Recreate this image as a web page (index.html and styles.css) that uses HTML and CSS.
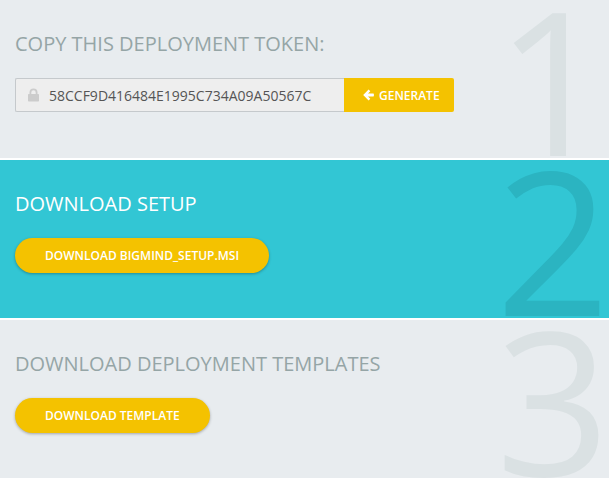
FILE: index.html
```
<!DOCTYPE html>
<html lang="en">
<head>
    <meta charset="UTF-8">
    <meta name="viewport" content="width=device-width, initial-scale=1.0">
    <title>Deployment</title>
    <link rel="stylesheet" href="styles.css">
</head>
<body>

    <section class="step">
        <span class="step-number" aria-hidden="true">1</span>
        <h2><label for="token">COPY THIS DEPLOYMENT TOKEN:</label></h2>
        <div class="token-group">
            <div class="token-field">
                <svg class="icon-lock" viewBox="0 0 11 14" aria-hidden="true">
                    <path d="M0.700 6H1.500V4.500a4 4 0 0 1 8 0V6h0.800a0.700 0.700 0 0 1 0.700 0.700v6a0.700 0.700 0 0 1-0.700 0.700H0.700a0.700 0.700 0 0 1-0.700-0.700v-6a0.700 0.700 0 0 1 0.700-0.700zM3.300 6h4.400V4.500a2.200 2.200 0 0 0-4.400 0z"/>
                </svg>
                <input type="text" id="token" name="token" class="token-input" value="58CCF9D416484E1995C734A09A50567C" readonly>
            </div>
            <button type="button" class="btn-generate">
                <svg class="icon-arrow" viewBox="0 0 11 12" aria-hidden="true">
                    <path d="M0.200 6L5.600 0.500L7.300 2.200L5 4.600H10.300a0.600 0.600 0 0 1 0.600 0.600V6.800a0.600 0.600 0 0 1-0.600 0.600H5L7.300 9.800L5.600 11.500z"/>
                </svg>
                GENERATE
            </button>
        </div>
    </section>

    <section class="step step-active">
        <span class="step-number" aria-hidden="true">2</span>
        <h2>DOWNLOAD SETUP</h2>
        <button type="button" class="btn">DOWNLOAD BIGMIND_SETUP.MSI</button>
    </section>

    <section class="step">
        <span class="step-number" aria-hidden="true">3</span>
        <h2>DOWNLOAD DEPLOYMENT TEMPLATES</h2>
        <button type="button" class="btn">DOWNLOAD TEMPLATE</button>
    </section>

</body>
</html>
```

FILE: styles.css
```
* {
    box-sizing: border-box;
}

body {
    font-family: "Open Sans", Arial, sans-serif;
    background-color: #ffffff;
    margin: 0;
    padding: 0;
}

.step {
    position: relative;
    overflow: hidden;
    min-height: 158px;
    padding: 30px 15px;
    background-color: #e8ecef;
    color: #95a5a6;
}

.step + .step {
    margin-top: 2px;
}

.step-active {
    background-color: #32c6d4;
    color: #ffffff;
}

/* Big digit behind the content */
.step-number {
    position: absolute;
    top: 0;
    right: -1px;
    font-size: 200px;
    line-height: 158px;
    color: #dae1e3;
}

.step-active .step-number {
    color: #2bb4c1;
}

h2 {
    position: relative;
    margin: 0 0 20px;
    font-size: 20px;
    font-weight: 400;
    line-height: 28px;
}

.token-group {
    position: relative;
    display: flex;
    max-width: 439px;
    height: 34px;
}

.token-field {
    display: flex;
    flex: 1;
    align-items: center;
    gap: 10px;
    min-width: 0;
    padding-left: 12px;
    background-color: #eeeeee;
    border: 1px solid #c5c9cc;
    border-right: none;
    border-radius: 2px 0 0 2px;
}

.icon-lock {
    flex: none;
    width: 11px;
    height: 14px;
    fill: #cccccc;
}

.token-input {
    flex: 1;
    min-width: 0;
    padding: 0;
    border: none;
    background: transparent;
    font-family: inherit;
    font-size: 14px;
    color: #555555;
}

.btn-generate {
    display: flex;
    align-items: center;
    gap: 5px;
    width: 110px;
    padding: 0 0 0 19px;
    border: none;
    border-radius: 0 2px 2px 0;
    background-color: #f4c200;
    color: #ffffff;
    font-family: inherit;
    font-size: 12px;
    font-weight: 600;
    cursor: pointer;
}

.icon-arrow {
    width: 11px;
    height: 12px;
    fill: #ffffff;
}

.btn {
    position: relative;
    display: block;
    height: 35px;
    padding: 0 30px;
    border: none;
    border-radius: 18px;
    background-color: #f4c200;
    box-shadow: 0 1px 3px rgba(0, 0, 0, 0.3);
    color: #ffffff;
    font-family: inherit;
    font-size: 12px;
    font-weight: 600;
    cursor: pointer;
}

.btn:hover,
.btn-generate:hover {
    background-color: #dcaf00;
}
```
